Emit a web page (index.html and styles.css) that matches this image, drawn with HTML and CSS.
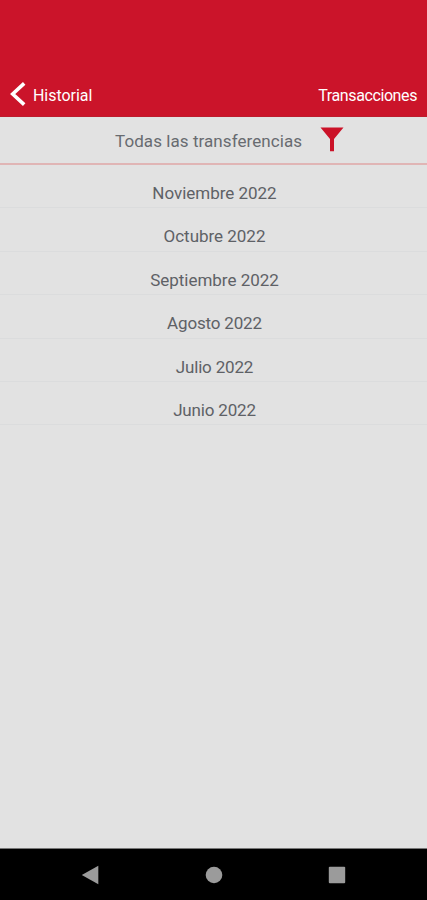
FILE: index.html
```html
<!DOCTYPE html>
<html lang="es">
<head>
<meta charset="utf-8">
<title>Historial</title>
<link rel="stylesheet" href="styles.css">
</head>
<body>
<div class="app">
  <header class="header">
    <div class="back">
      <svg class="chevron" width="18" height="26" viewBox="0 0 18 26"><path d="M15.2 2.4 3.7 13 15.2 23.6" fill="none" stroke="#fff" stroke-width="3.6"/></svg>
      <span class="back-label">Historial</span>
    </div>
    <span class="title">Transacciones</span>
  </header>
  <div class="filter">
    <span class="filter-label">Todas las transferencias</span>
    <svg class="funnel" width="24" height="25" viewBox="0 0 24 25"><path d="M.5.5h23L14 12V24.2h-4V12Z" fill="#cb1228"/></svg>
  </div>
  <ul class="months">
    <li class="month"><span class="label">Noviembre 2022</span></li>
    <li class="month"><span class="label">Octubre 2022</span></li>
    <li class="month"><span class="label">Septiembre 2022</span></li>
    <li class="month"><span class="label tight">Agosto 2022</span></li>
    <li class="month"><span class="label tight">Julio 2022</span></li>
    <li class="month"><span class="label tight">Junio 2022</span></li>
  </ul>
  <nav class="navbar">
    <svg width="18" height="20" viewBox="0 0 18 20"><path d="M.8 10 17.3.8v18.4Z" fill="#9b9b9b"/></svg>
    <svg width="18" height="18" viewBox="0 0 18 18"><circle cx="9" cy="9" r="8.3" fill="#9b9b9b"/></svg>
    <svg width="18" height="18" viewBox="0 0 18 18"><rect x=".8" y=".8" width="16.4" height="16.4" rx="1" fill="#9b9b9b"/></svg>
  </nav>
</div>
</body>
</html>
```
FILE: styles.css
```css
* { box-sizing: border-box; }
body { margin: 0; font-family: Roboto, "Liberation Sans", sans-serif; }
.app { width: 427px; height: 900px; display: flex; flex-direction: column; background: #e2e2e2; }
.header { height: 117px; padding: 72px 10px 0 9px; display: flex; justify-content: space-between; align-items: center; background: #cb142a; border-bottom: 1px solid #bd1c2d; color: #fff; font-size: 16px; }
.back { display: flex; align-items: center; gap: 6px; }
.chevron { display: block; }
.back-label { letter-spacing: -.05px; padding-top: 2px; }
.title { letter-spacing: -.4px; padding-top: 2px; }
.filter { height: 48px; padding: 0 83px 0 115px; display: flex; align-items: center; justify-content: space-between; border-bottom: 2px solid #e0b5b5; color: #686b70; font-size: 17px; }
.filter-label { letter-spacing: .07px; padding-top: 2px; }
.funnel { display: block; margin-bottom: 2px; }
.months { list-style: none; margin: 0; padding: 0; flex: 1; color: #5e6166; font-size: 17px; }
.month { height: 43.4px; padding: 18px 0 0 2px; line-height: 20px; text-align: center; border-bottom: 1px solid #dbdcdd; }
.label { letter-spacing: -.02px; }
.tight { letter-spacing: -.17px; }
.navbar { height: 52px; padding: 0 81px; display: flex; align-items: center; justify-content: space-between; background: #000; border-top: 1px solid #777; }
```
